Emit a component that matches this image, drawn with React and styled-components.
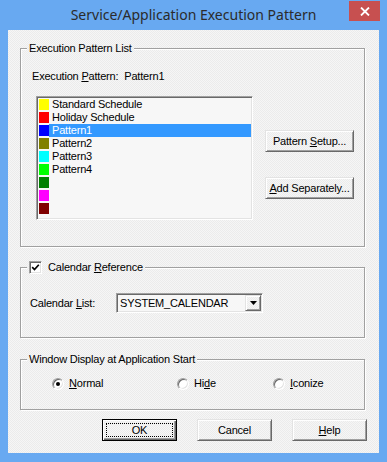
import React from 'react';
import styled, { createGlobalStyle, css } from 'styled-components';

const GlobalStyle = createGlobalStyle`
  html, body { margin: 0; padding: 0; }
  body {
    width: 387px; height: 462px; overflow: hidden;
    background: #68a9f1;
    font-family: "Liberation Sans", Arial, sans-serif;
  }
`;

const dither = css`
  background-color: #f0f0f0;
  background-image: repeating-conic-gradient(#f6f6f6 0 25%, #ebebeb 0 50%);
  background-size: 2px 2px;
  background-attachment: fixed;
`;

const sunken = css`
  border: 1px solid;
  border-color: #a0a0a0 #ffffff #ffffff #a0a0a0;
  box-shadow: inset 1px 1px 0 #696969, inset -1px -1px 0 #e3e3e3;
`;

const raised = css`
  border: 1px solid;
  border-color: #e3e3e3 #696969 #696969 #e3e3e3;
  box-shadow: inset 1px 1px 0 #ffffff, inset -1px -1px 0 #a0a0a0;
`;

const Window = styled.div`
  width: 387px; height: 462px; box-sizing: border-box;
  background: #68a9f1;
  display: flex; flex-direction: column;
  padding: 0 8px 9px;
`;

const TitleBar = styled.div`
  height: 30px; flex: none;
  display: grid; grid-template-columns: 1fr auto 1fr; align-items: start;
`;

const Title = styled.div`
  grid-column: 2;
  font-family: "Noto Sans", "Open Sans", sans-serif;
  font-size: 14px; line-height: 30px; color: #2b2b2b;
  white-space: nowrap;
`;

const CloseButton = styled.div`
  grid-column: 3; justify-self: end;
  width: 31px; height: 20px; margin: 1px -1px 0 0;
  background: #c75050;
  display: flex; align-items: center; justify-content: center;
`;

const Client = styled.div`
  flex: 1;
  ${dither};
  display: flex; flex-direction: column;
  padding: 12px 14px 12px 12px;
  font-size: 11px; letter-spacing: -0.2px; color: #000;
`;

const Group = styled.fieldset`
  margin: ${p => p.$top || 0}px 0 0;
  padding: 0; min-width: 0;
  border: 1px solid #a0a0a0;
  box-shadow: inset 1px 1px 0 #fff, 1px 1px 0 #fff;
`;

const Legend = styled.legend`
  margin-left: 6px; padding: 0 2px;
  height: 13px; line-height: 13px;
  ${dither};
  display: flex; align-items: center; gap: 6px;
  white-space: nowrap;
`;

const PatternBody = styled.div`
  display: flex;
  padding: 15px 0 26px 11px;
`;

const LeftCol = styled.div`
  display: flex; flex-direction: column;
`;

const CurrentLine = styled.div`
  display: flex; line-height: 13px; height: 13px; white-space: nowrap;
`;

const CurrentValue = styled.span`
  margin-left: 6px;
`;

const ListBox = styled.div`
  box-sizing: border-box;
  width: 217px; height: 124px;
  margin: 13px 0 0 4px;
  padding: 1px;
  ${sunken};
  background: #f7f7f7;
  display: flex; flex-direction: column;
`;

const Row = styled.div`
  display: flex; align-items: center; height: 13px;
`;

const Swatch = styled.span`
  width: 10px; height: 11px; margin-left: 1px; flex: none;
  background: ${p => p.$color};
`;

const ItemText = styled.span`
  flex: 1; height: 13px; line-height: 13px; padding-left: 3px;
  background: ${p => (p.$selected ? '#3399ff' : 'transparent')};
  color: ${p => (p.$selected ? '#fff' : '#000')};
  white-space: nowrap;
`;

const ButtonsCol = styled.div`
  display: flex; flex-direction: column;
  margin-left: 12px; padding-top: 60px; gap: 25px;
`;

const PushButton = styled.div`
  box-sizing: border-box;
  width: ${p => p.$w}px; height: 22px;
  ${dither};
  ${raised};
  display: flex; align-items: center; justify-content: center;
  font-size: 11px; color: #000; white-space: pre;
`;

const DefaultButton = styled(PushButton)`
  border: 1px solid #000;
  box-shadow: inset 1px 1px 0 #fff, inset -1px -1px 0 #696969, inset -2px -2px 0 #a0a0a0;
  padding: 3px;
  align-items: stretch;
`;

const FocusRect = styled.span`
  flex: 1;
  border: 1px dotted #000;
  display: flex; align-items: center; justify-content: center;
`;

const CheckBox = styled.span`
  box-sizing: border-box;
  width: 13px; height: 13px; flex: none;
  ${sunken};
  background: #fff;
  display: flex; align-items: center; justify-content: center;
`;

const CalendarBody = styled.div`
  display: flex; align-items: center;
  padding: 19px 0 24px 9px;
`;

const FieldLabel = styled.span`
  width: 86px; line-height: 13px;
`;

const Combo = styled.div`
  box-sizing: border-box;
  width: 147px; height: 20px;
  padding: 1px;
  ${sunken};
  background: #f7f7f7;
  display: flex; align-items: stretch;
`;

const ComboText = styled.span`
  flex: 1; padding-left: 2px;
  display: flex; align-items: center;
  font-size: 11px;
`;

const DropButton = styled.span`
  box-sizing: border-box;
  width: 16px; flex: none;
  ${dither};
  ${raised};
  display: flex; align-items: center; justify-content: center;
`;

const RadioBody = styled.div`
  display: grid; grid-template-columns: 125px 96px auto;
  padding: 11px 0 19px 31px;
`;

const RadioItem = styled.div`
  display: flex; align-items: center; gap: 5px;
  height: 13px; line-height: 13px;
`;

const RadioCircle = styled.span`
  box-sizing: border-box;
  width: 12px; height: 12px; border-radius: 50%; flex: none;
  border: 1px solid;
  border-color: #a0a0a0 #ffffff #ffffff #a0a0a0;
  box-shadow: inset 1px 1px 0 #696969, inset -1px -1px 0 #e3e3e3;
  background: #fff;
  display: flex; align-items: center; justify-content: center;
`;

const RadioDot = styled.span`
  width: 4px; height: 4px; border-radius: 50%; background: #000;
`;

const ButtonRow = styled.div`
  display: flex; justify-content: flex-end; gap: 20px;
  margin: 9px -2px 0 0;
`;

const items = [
  { color: '#ffff00', label: 'Standard Schedule' },
  { color: '#ff0000', label: 'Holiday Schedule' },
  { color: '#0000ff', label: 'Pattern1', selected: true },
  { color: '#808000', label: 'Pattern2' },
  { color: '#00ffff', label: 'Pattern3' },
  { color: '#00ff00', label: 'Pattern4' },
  { color: '#008000', label: '' },
  { color: '#ff00ff', label: '' },
  { color: '#800000', label: '' },
];

const radios = [
  { pre: '', key: 'N', post: 'ormal', checked: true },
  { pre: 'Hi', key: 'd', post: 'e' },
  { pre: '', key: 'I', post: 'conize' },
];

export default function App() {
  return (
    <>
      <GlobalStyle />
      <Window>
        <TitleBar>
          <Title>Service/Application Execution Pattern</Title>
          <CloseButton>
            <svg width="10" height="9" viewBox="0 0 10 9">
              <path d="M1 0.5 L9 8.5 M9 0.5 L1 8.5" stroke="#fff" strokeWidth="1.8" fill="none" />
            </svg>
          </CloseButton>
        </TitleBar>
        <Client>
          <Group>
            <Legend>Execution Pattern List</Legend>
            <PatternBody>
              <LeftCol>
                <CurrentLine>
                  <span>Execution <u>P</u>attern:</span>
                  <CurrentValue>Pattern1</CurrentValue>
                </CurrentLine>
                <ListBox>
                  {items.map((it, i) => (
                    <Row key={i}>
                      <Swatch $color={it.color} />
                      <ItemText $selected={it.selected}>{it.label}</ItemText>
                    </Row>
                  ))}
                </ListBox>
              </LeftCol>
              <ButtonsCol>
                <PushButton $w={89}><span>Pattern <u>S</u>etup...</span></PushButton>
                <PushButton $w={89}><span><u>A</u>dd Separately...</span></PushButton>
              </ButtonsCol>
            </PatternBody>
          </Group>

          <Group $top={14}>
            <Legend>
              <CheckBox>
                <svg width="9" height="9" viewBox="0 0 9 9">
                  <path d="M1.2 4.2 L3.5 6.6 L7.8 1.8" stroke="#000" strokeWidth="1.7" fill="none" />
                </svg>
              </CheckBox>
              <span>Calendar <u>R</u>eference</span>
            </Legend>
            <CalendarBody>
              <FieldLabel>Calendar <u>L</u>ist:</FieldLabel>
              <Combo>
                <ComboText>SYSTEM_CALENDAR</ComboText>
                <DropButton>
                  <svg width="7" height="4" viewBox="0 0 7 4">
                    <path d="M0 0 H7 L3.5 4 Z" fill="#000" />
                  </svg>
                </DropButton>
              </Combo>
            </CalendarBody>
          </Group>

          <Group $top={15}>
            <Legend>Window Display at Application Start</Legend>
            <RadioBody>
              {radios.map((r, i) => (
                <RadioItem key={i}>
                  <RadioCircle>{r.checked && <RadioDot />}</RadioCircle>
                  <span>{r.pre}<u>{r.key}</u>{r.post}</span>
                </RadioItem>
              ))}
            </RadioBody>
          </Group>

          <ButtonRow>
            <DefaultButton $w={75}>
              <FocusRect>OK</FocusRect>
            </DefaultButton>
            <PushButton $w={75}>Cancel</PushButton>
            <PushButton $w={75}><span><u>H</u>elp</span></PushButton>
          </ButtonRow>
        </Client>
      </Window>
    </>
  );
}
